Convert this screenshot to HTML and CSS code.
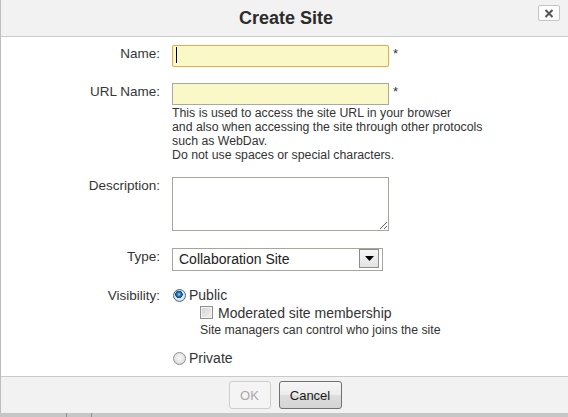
FILE: index.html
```html
<!DOCTYPE html>
<html lang="en">
<head>
<meta charset="utf-8">
<title>Create Site</title>
<link rel="stylesheet" href="styles.css">
</head>
<body>
<div class="dialog">
  <header class="hd">
    <h1 class="title">Create Site</h1>
    <button class="close" type="button" aria-label="Close">
      <svg width="10" height="9" viewBox="0 0 10 9"><path d="M1.5 1 L8.5 8 M8.5 1 L1.5 8" stroke="#555" stroke-width="2" fill="none"/></svg>
    </button>
  </header>
  <form class="bd">
    <div class="row r-name">
      <label class="lbl">Name:</label>
      <div class="field">
        <span class="inwrap"><input class="txt focus" type="text"><span class="caret"></span></span><span class="req">*</span>
      </div>
    </div>
    <div class="row r-url">
      <label class="lbl">URL Name:</label>
      <div class="field col">
        <div class="inline"><input class="txt" type="text"><span class="req">*</span></div>
        <div class="help">This is used to access the site URL in your browser<br>and also when accessing the site through other protocols<br>such as WebDav.<br>Do not use spaces or special characters.</div>
      </div>
    </div>
    <div class="row r-desc">
      <label class="lbl">Description:</label>
      <div class="field"><textarea class="area"></textarea></div>
    </div>
    <div class="row r-type">
      <label class="lbl">Type:</label>
      <div class="field">
        <div class="select"><span class="sel-text">Collaboration Site</span><span class="sel-btn"><svg width="9" height="5" viewBox="0 0 9 5"><path d="M0 0 H9 L4.5 5 Z" fill="#000"/></svg></span></div>
      </div>
    </div>
    <div class="row r-vis">
      <label class="lbl">Visibility:</label>
      <div class="field col">
        <div class="opt"><span class="radio on"></span><span class="opt-text">Public</span></div>
        <div class="sub">
          <div class="chk-row"><span class="chk"></span><span class="opt-text">Moderated site membership</span></div>
          <div class="note">Site managers can control who joins the site</div>
        </div>
        <div class="opt priv"><span class="radio"></span><span class="opt-text">Private</span></div>
      </div>
    </div>
  </form>
  <footer class="ft">
    <button class="btn ok" type="button" disabled>OK</button>
    <button class="btn cancel" type="button">Cancel</button>
  </footer>
</div>
<div class="strip"><span class="tick t1"></span><span class="tick t2"></span></div>
</body>
</html>
```

FILE: styles.css
```css
* { box-sizing: border-box; }
html, body { margin: 0; padding: 0; }
body {
  width: 568px;
  height: 417px;
  overflow: hidden;
  font-family: "Liberation Sans", Arial, sans-serif;
  color: #333;
  background: #fff;
}
.dialog {
  border-left: 1px solid #bdbdbd;
  height: 413px;
  display: flex;
  flex-direction: column;
}
.hd {
  position: relative;
  height: 37px;
  background: #f2f2f2;
  border-bottom: 1px solid #cacaca;
  display: flex;
  align-items: flex-start;
}
.title {
  flex: 1;
  margin: 0;
  padding-left: 3px;
  text-align: center;
  font-size: 18px;
  font-weight: bold;
  line-height: 36px;
  color: #2b2b2b;
}
.close {
  position: absolute;
  top: 5px;
  right: 8px;
  width: 22px;
  height: 16px;
  padding: 0;
  border: 1px solid #c4c4c4;
  border-radius: 2px;
  background: #fdfdfd;
  display: flex;
  align-items: center;
  justify-content: center;
}
.bd {
  height: 339px;
  margin: 0;
  padding-top: 8px;
  display: flex;
  flex-direction: column;
}
.row {
  display: grid;
  grid-template-columns: 159px 1fr;
  column-gap: 12px;
}
.r-url { margin-top: 16px; }
.r-desc { margin-top: 15px; }
.r-type { margin-top: 17px; }
.r-vis { margin-top: 16px; }
.lbl {
  text-align: right;
  font-size: 13.5px;
  line-height: 17px;
  color: #353535;
}
.field { display: flex; align-items: flex-start; }
.field.col { flex-direction: column; }
.inline { display: flex; align-items: flex-start; }
.inwrap { position: relative; display: block; }
.txt {
  display: block;
  width: 217px;
  height: 22px;
  margin: 0;
  padding: 0 4px;
  border: 1px solid #a9a9a4;
  background: #fbf8c7;
  font: 13px "Liberation Sans", Arial, sans-serif;
  outline: none;
}
.txt.focus {
  border-color: #e2ad58;
  border-radius: 2px;
  box-shadow: 0 0 1px #f3c679;
}
.caret {
  position: absolute;
  left: 4px;
  top: 2px;
  width: 1px;
  height: 16px;
  background: #000;
}
.req {
  margin-left: 4px;
  font-size: 13px;
  line-height: 17px;
  color: #333;
}
.help {
  margin-top: 1px;
  font-size: 12.3px;
  line-height: 14px;
  color: #333;
}
.area {
  display: block;
  width: 217px;
  height: 54px;
  margin: 0;
  border: 1px solid #a6a69c;
  background: #fff;
  resize: both;
}
.select {
  width: 211px;
  height: 23px;
  border: 1px solid #a6a69c;
  display: flex;
  align-items: flex-start;
  justify-content: space-between;
  background: #fff;
}
.sel-text {
  padding-left: 6px;
  font-size: 14px;
  line-height: 19px;
  padding-top: 1px;
  color: #222;
}
.sel-btn {
  width: 20px;
  height: 19px;
  margin-right: 3px;
  border: 1px solid #8c8c8c;
  background: linear-gradient(#f7f7f7, #e3e3e3);
  display: flex;
  align-items: center;
  justify-content: center;
}
.opt {
  display: flex;
  align-items: center;
  height: 16px;
  margin-left: 1px;
  gap: 3px;
}
.opt-text {
  font-size: 14px;
  line-height: 16px;
  color: #333;
}
.radio {
  width: 13px;
  height: 13px;
  border-radius: 50%;
  border: 1px solid #8d8f91;
  background: radial-gradient(circle at 50% 45%, #fafafa 0, #e6e6e6 50%, #cfd0d1 100%);
}
.radio.on {
  border-color: #3a6d99;
  background:
    radial-gradient(circle at 45% 40%, #a6dcff 0, #2e8fd6 1.5px, #0f3f6e 3.5px, transparent 4px),
    radial-gradient(circle at 50% 45%, #fafafa 0, #e3e5e8 55%, #c4c8cc 100%);
}
.sub { padding-left: 28px; margin-top: 1px; }
.chk-row { display: flex; align-items: center; gap: 5px; height: 17px; }
.chk {
  width: 13px;
  height: 13px;
  border: 1px solid #8f8f8f;
  box-shadow: inset 0 0 0 1px #f4f4f4;
  background: linear-gradient(135deg, #d2d2d2, #f1f1f1);
}
.note {
  margin-top: 2px;
  font-size: 12.3px;
  line-height: 14px;
  color: #333;
}
.opt.priv { margin-top: 13px; }
.ft {
  height: 37px;
  border-top: 1px solid #cacaca;
  background: #f2f2f2;
  display: flex;
  align-items: center;
  justify-content: center;
  gap: 8px;
  padding-left: 1px;
}
.btn {
  height: 28px;
  margin: 0;
  padding: 0;
  border: 1px solid #707070;
  border-radius: 3px;
  background: linear-gradient(#f6f6f6 0, #ededed 48%, #dddddd 52%, #d4d4d4 100%);
  font: 13px "Liberation Sans", Arial, sans-serif;
  color: #1a1a1a;
}
.btn.ok { width: 42px; }
.btn.cancel { width: 63px; }
.btn:disabled {
  border-color: #cdcdcd;
  background: #f4f4f4;
  color: #a9a9a9;
}
.strip {
  height: 4px;
  background: #c6c6c6;
  display: flex;
}
.tick { width: 1px; height: 4px; background: #8f8f8f; }
.t1 { margin-left: 66px; }
.t2 { margin-left: 24px; }
```
